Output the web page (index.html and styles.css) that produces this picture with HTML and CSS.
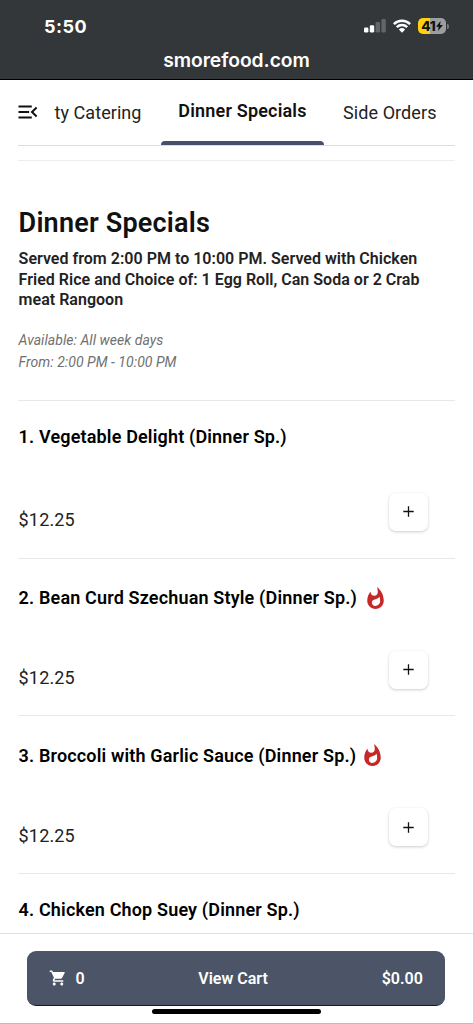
FILE: index.html
```html
<!DOCTYPE html>
<html lang="en">
<head>
<meta charset="utf-8">
<title>smorefood.com</title>
<link rel="stylesheet" href="styles.css">
</head>
<body>
<div class="screen">
  <header class="browser">
    <div class="status">
      <span class="time">5:50</span>
      <div class="indicators">
        <svg class="signal" width="22" height="14" viewBox="0 0 22 14">
          <rect x="0" y="8.5" width="4.4" height="5" rx="1.3" fill="#fff"/>
          <rect x="5.8" y="6.2" width="4.4" height="7.3" rx="1.3" fill="#fff"/>
          <rect x="11.6" y="3" width="4.4" height="10.5" rx="1.3" fill="#636567"/>
          <rect x="17.4" y="0" width="4.4" height="13.5" rx="1.3" fill="#636567"/>
        </svg>
        <svg class="wifi" width="18" height="14" viewBox="0 0 18 14">
          <g fill="none" stroke="#fff" stroke-width="2.5">
            <path d="M.9 5.1A11.6 11.6 0 0 1 17.1 5.1"/>
            <path d="M3.8 8.2A7.5 7.5 0 0 1 14.2 8.2"/>
          </g>
          <path d="M5.9 10.4a4.5 4.5 0 0 1 6.2 0L9 13.7z" fill="#fff"/>
        </svg>
        <div class="battery">
          <span class="level">41</span>
          <svg width="7" height="10" viewBox="0 0 7 10"><path d="M4.6 0L.1 5.8h2.6L2 10l4.9-6H4z" fill="#111"/></svg>
        </div>
        <span class="nub"></span>
      </div>
    </div>
    <div class="address">smorefood.com</div>
  </header>

  <nav class="tabs">
    <svg class="menu" width="20" height="14" viewBox="0 0 20 14"><path d="M.5 1.5h13.3M.5 7h10.6M.5 12.5h13.3M18.6 2.5L14 7l4.6 4.5"/></svg>
    <span class="tab first">ty Catering</span>
    <span class="tab active">Dinner Specials</span>
    <span class="tab last">Side Orders</span>
  </nav>

  <main class="content">
    <section class="intro">
      <h1>Dinner Specials</h1>
      <p class="about">Served from 2:00 PM to 10:00 PM. Served with Chicken<br>Fried Rice and Choice of: 1 Egg Roll, Can Soda or 2 Crab<br>meat Rangoon</p>
      <p class="hours">Available: All week days<br>From: 2:00 PM - 10:00 PM</p>
    </section>
    <article class="item">
      <h2><span>1. Vegetable Delight (Dinner Sp.)</span></h2>
      <div class="buy"><span class="price">$12.25</span><button class="add"><svg width="11" height="11" viewBox="0 0 11 11"><path d="M5.5.3v10.4M.3 5.5h10.4"/></svg></button></div>
    </article>
    <article class="item spicy">
      <h2><span>2. Bean Curd Szechuan Style (Dinner Sp.)</span><svg class="fire" viewBox="4 .67 16 21.33"><path d="M13.5.67s.74 2.65.74 4.8c0 2.06-1.35 3.73-3.41 3.73-2.07 0-3.63-1.67-3.63-3.73l.03-.36C5.21 7.51 4 10.62 4 14c0 4.42 3.58 8 8 8s8-3.58 8-8C20 8.61 17.41 3.8 13.5.67zM11.71 19c-1.78 0-3.22-1.4-3.22-3.14 0-1.62 1.05-2.76 2.81-3.12 1.77-.36 3.6-1.21 4.62-2.58.39 1.29.59 2.65.59 4.04 0 2.65-2.15 4.8-4.8 4.8z"/></svg></h2>
      <div class="buy"><span class="price">$12.25</span><button class="add"><svg width="11" height="11" viewBox="0 0 11 11"><path d="M5.5.3v10.4M.3 5.5h10.4"/></svg></button></div>
    </article>
    <article class="item spicy close">
      <h2><span>3. Broccoli with Garlic Sauce (Dinner Sp.)</span><svg class="fire" viewBox="4 .67 16 21.33"><path d="M13.5.67s.74 2.65.74 4.8c0 2.06-1.35 3.73-3.41 3.73-2.07 0-3.63-1.67-3.63-3.73l.03-.36C5.21 7.51 4 10.62 4 14c0 4.42 3.58 8 8 8s8-3.58 8-8C20 8.61 17.41 3.8 13.5.67zM11.71 19c-1.78 0-3.22-1.4-3.22-3.14 0-1.62 1.05-2.76 2.81-3.12 1.77-.36 3.6-1.21 4.62-2.58.39 1.29.59 2.65.59 4.04 0 2.65-2.15 4.8-4.8 4.8z"/></svg></h2>
      <div class="buy"><span class="price">$12.25</span><button class="add"><svg width="11" height="11" viewBox="0 0 11 11"><path d="M5.5.3v10.4M.3 5.5h10.4"/></svg></button></div>
    </article>
    <article class="item">
      <h2><span>4. Chicken Chop Suey (Dinner Sp.)</span></h2>
    </article>
  </main>

  <footer class="footer">
    <div class="cart">
      <span class="count"><svg width="18" height="18" viewBox="0 0 24 24"><path d="M7 18c-1.1 0-1.99.9-1.99 2S5.9 22 7 22s2-.9 2-2-.9-2-2-2zM1 2v2h2l3.6 7.59-1.35 2.45c-.16.28-.25.61-.25.96 0 1.1.9 2 2 2h12v-2H7.42c-.14 0-.25-.11-.25-.25l.03-.12.9-1.63h7.45c.75 0 1.41-.41 1.75-1.03l3.58-6.49A1 1 0 0 0 20 4H5.21l-.94-2H1zm16 16c-1.1 0-1.99.9-1.99 2s.89 2 1.99 2 2-.9 2-2-.9-2-2-2z"/></svg>0</span>
      <span class="view">View Cart</span>
      <span class="total">$0.00</span>
    </div>
    <div class="home"></div>
  </footer>
</div>
</body>
</html>
```
FILE: styles.css
```css
* { box-sizing: border-box; }
body { margin: 0; background: #fff; font-family: Roboto, "Liberation Sans", sans-serif; color: #000; }
h1, h2, p { margin: 0; }
svg { display: block; flex: none; }
.screen { width: 473px; height: 1024px; display: flex; flex-direction: column; overflow: hidden; border-bottom: 1px solid #bcbcbc; white-space: nowrap; }

.browser { height: 80px; flex: none; background: #34373a; border-bottom: 1px solid #000; color: #fff; font-family: Inter, sans-serif; }
.status { height: 48px; padding: 4px 24px 0 44px; display: flex; align-items: center; justify-content: space-between; }
.time { font-size: 18px; font-weight: 700; letter-spacing: .5px; }
.indicators { display: flex; align-items: center; }
.wifi { margin-left: 7px; }
.battery { margin-left: 7px; width: 28px; height: 16px; border-radius: 5px; background: linear-gradient(90deg, #fdd10b 12px, #9c9d9e 12px); color: #111; display: flex; align-items: center; justify-content: center; }
.level { font-size: 13.5px; line-height: 15px; font-weight: 800; letter-spacing: 0; }
.nub { width: 2px; height: 5px; margin-left: 1px; border-radius: 0 2px 2px 0; background: #77797b; }
.address { font-size: 19.3px; font-weight: 600; line-height: 24px; text-align: center; letter-spacing: -.05px; }

.tabs { height: 66px; flex: none; margin: 0 18px; display: flex; border-bottom: 1px solid #dcdcdc; }
.menu { margin: 25px 2px 0 0; fill: none; stroke: #111; stroke-width: 2; }
.tab { font-size: 18px; line-height: 26px; padding-top: 20px; color: #222; }
.first { width: 107px; padding-left: 14.5px; margin-right: 14px; letter-spacing: .06px; }
.active { width: 163px; padding-top: 18px; text-align: center; font-weight: 600; color: #111; letter-spacing: .18px; position: relative; }
.active::after { content: ""; position: absolute; left: 0; right: 0; bottom: 0; height: 4px; background: #45506a; border-radius: 4px 4px 0 0; }
.last { padding-left: 19px; letter-spacing: .08px; }

.content { flex: 1; min-height: 0; overflow: hidden; margin: 14px 18px 0; border-top: 1px solid #eee; }
.intro { height: 239px; padding: 45px 0 0 .6px; }
h1 { font-size: 27px; line-height: 34px; font-weight: 600; color: #111; letter-spacing: .2px; }
.about { margin-top: 9px; font-size: 16px; line-height: 20.7px; font-weight: 600; color: #222; letter-spacing: .02px; }
.hours { margin-top: 19px; font-size: 14px; line-height: 21.7px; font-style: italic; color: #707070; letter-spacing: .05px; }
.item { height: 157.7px; border-top: 1px solid #e8e8e8; padding-top: 23px; }
h2 { height: 24px; display: flex; align-items: center; padding-left: .6px; font-size: 18px; font-weight: 600; letter-spacing: .16px; }
.fire { width: 17px; height: 22px; margin-left: 9.8px; fill: #c62828; }
.close .fire { margin-left: 8px; }
.spicy { padding-top: 27px; }
.buy { display: flex; justify-content: space-between; align-items: flex-start; padding: 44.5px 27px 0 .6px; }
.spicy .buy { padding-top: 41px; }
.price { font-size: 18px; line-height: 22px; padding-top: 16.4px; color: #222; letter-spacing: .15px; }
.add { width: 39px; height: 38px; padding: 0; border: 0; border-radius: 7px; background: #fff; box-shadow: 0 1px 3px rgba(0,0,0,.2); display: flex; align-items: center; justify-content: center; }
.add path { stroke: #111; stroke-width: 1.3; }

.footer { height: 90px; flex: none; border-top: 1px solid #e2e2e2; padding: 17px 28px 0 27px; }
.cart { height: 55px; border-radius: 9px; background: #4b5567; border-bottom: 1px solid #0d173f; color: #fff; display: grid; grid-template-columns: 1fr auto 1fr; align-items: center; padding: 0 22px; font-size: 16px; font-weight: 600; }
.count { display: flex; align-items: center; gap: 8.5px; }
.count svg { fill: #fff; }
.view { padding-right: 6px; }
.total { text-align: right; letter-spacing: .05px; }
.home { width: 169px; height: 5px; margin: 3px 0 0 125px; border-radius: 3px; background: #000; }
```
